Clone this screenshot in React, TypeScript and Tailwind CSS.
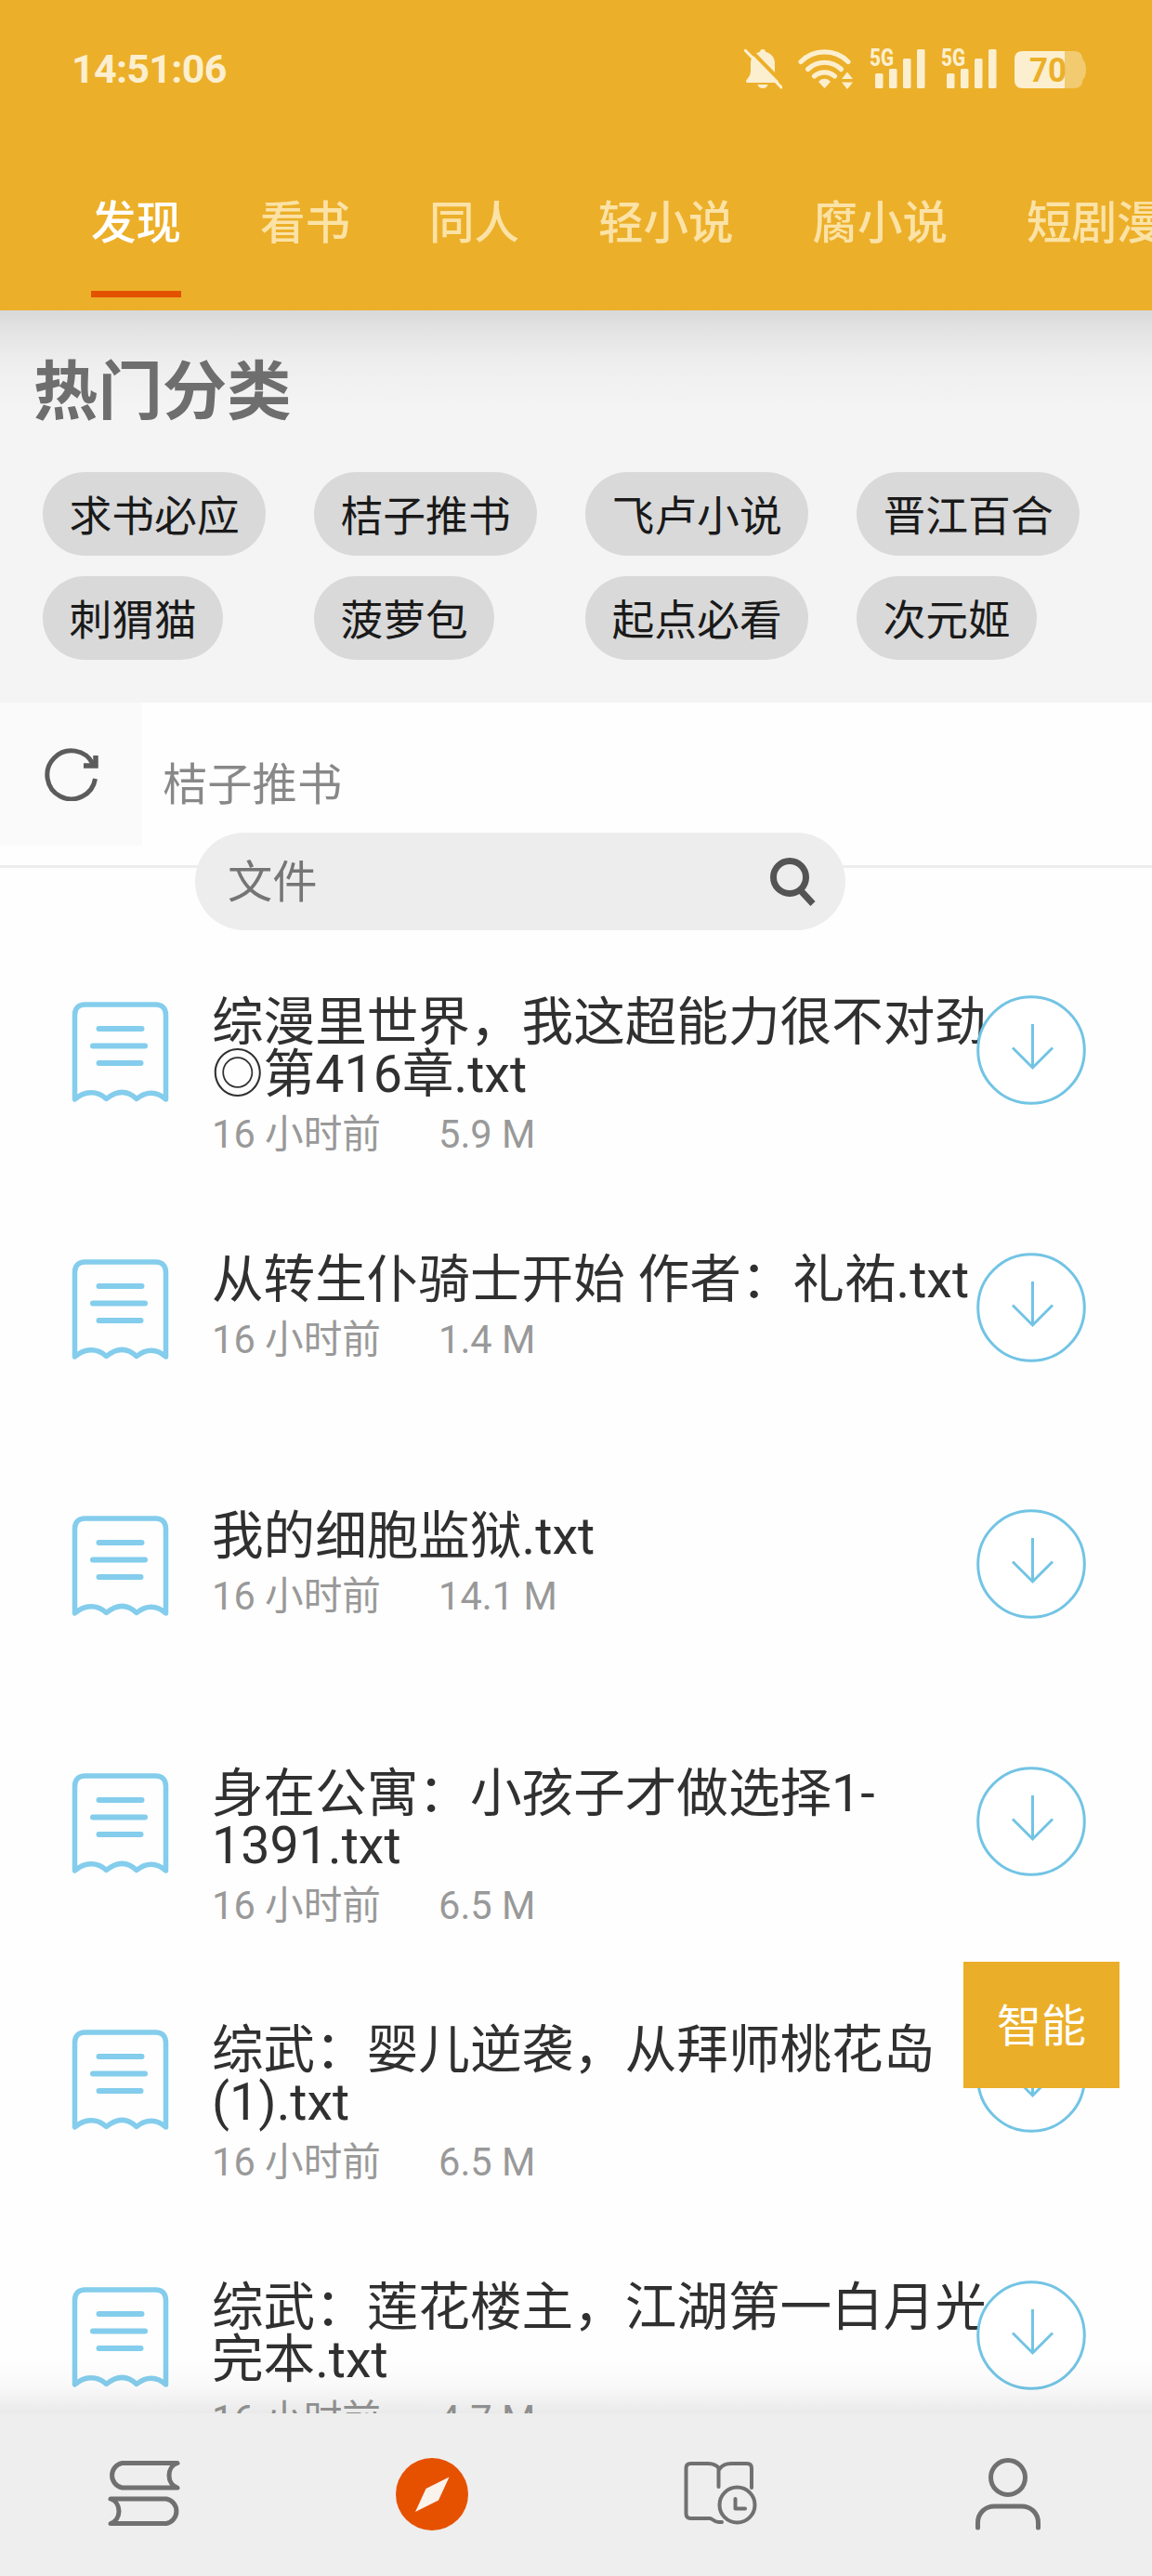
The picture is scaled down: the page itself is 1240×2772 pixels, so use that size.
import type { ReactNode } from 'react';

type Book = { title: string; time: string; size: string };

const TABS = ['发现', '看书', '同人', '轻小说', '腐小说', '短剧漫画'];

const CATEGORIES = [
  '求书必应', '桔子推书', '飞卢小说', '晋江百合',
  '刺猬猫', '菠萝包', '起点必看', '次元姬',
];

const BOOKS: Book[] = [
  { title: '综漫里世界，我这超能力很不对劲\n◎第416章.txt', time: '16 小时前', size: '5.9 M' },
  { title: '从转生仆骑士开始 作者：礼祐.txt', time: '16 小时前', size: '1.4 M' },
  { title: '我的细胞监狱.txt', time: '16 小时前', size: '14.1 M' },
  { title: '身在公寓：小孩子才做选择1-\n1391.txt', time: '16 小时前', size: '6.5 M' },
  { title: '综武：婴儿逆袭，从拜师桃花岛\n(1).txt', time: '16 小时前', size: '6.5 M' },
  { title: '综武：莲花楼主，江湖第一白月光\n完本.txt', time: '16 小时前', size: '4.7 M' },
];

function BellOffIcon() {
  return (
    <svg width="41" height="44" viewBox="0 0 41 44" fill="#fcefcf">
      <path d="M20 1c2 0 3 1.200 3 2.800C29 5.200 33 10 33 16v9c0 4 1.500 6 3.500 8.500 1 1.500.5 3.500-.5 3.500H3.500C2 37 1.500 35.500 2.500 34 5.500 30.500 7 28 7 24v-8C7 10 11 5.200 17 3.800 17 2.200 18 1 20 1z" />
      <path d="M14.500 39h11c-1 3-3 4-5.500 4s-4.500-1-5.500-4z" />
      <path d="M4 -1 45 41" stroke="#ecaf29" strokeWidth="4" />
      <path d="M1.500 2.500 40 42" stroke="#fcefcf" strokeWidth="3.200" strokeLinecap="round" />
    </svg>
  );
}

function WifiIcon() {
  return (
    <svg width="60" height="44" viewBox="0 0 60 44" fill="none" stroke="#fcefcf" strokeWidth="5.200" strokeLinecap="round">
      <path d="M3 14.500a36 36 0 0 1 51 0" />
      <path d="M10.500 22.500a26 26 0 0 1 36 0" />
      <path d="M17.500 30a16.500 16.500 0 0 1 22 0" />
      <path d="M22 36c3-4.500 10-4.500 13 0l-6.500 7z" fill="#fcefcf" stroke="none" />
      <path d="M47 33l6-7.500 6 7.500zM47 36.500l6 7.500 6-7.500z" fill="#fcefcf" stroke="none" />
    </svg>
  );
}

function SignalIcon() {
  return (
    <svg className="overflow-visible" width="60" height="44" viewBox="0 0 60 44" fill="#fcefcf">
      <text x="0" y="18.500" fontFamily="Roboto, sans-serif" fontSize="26" fontWeight="800" textLength="26" lengthAdjust="spacingAndGlyphs">
        5G
      </text>
      <rect x="6" y="27" width="8.500" height="16" rx="1.500" />
      <rect x="21" y="22" width="8.500" height="21" rx="1.500" />
      <rect x="36" y="11" width="8.500" height="32" rx="1.500" />
      <rect x="51" y="1" width="8.500" height="42" rx="1.500" />
    </svg>
  );
}

function BatteryIcon() {
  return (
    <svg width="80" height="44" viewBox="0 0 80 44">
      <path d="M56 3h10c6 0 9 3 9.500 9 2 2 3.500 5 3.500 11s-1.500 9-3.500 11c-.5 6-3.500 9-9.500 9H56z" fill="#f2ca70" />
      <path d="M11 3h45v40H11c-6 0-9-3-9-9V12c0-6 3-9 9-9z" fill="#fcefcf" />
      <text x="18" y="36" fill="#ecaf29" fontFamily="Roboto, sans-serif" fontSize="36" fontWeight="700" textLength="40" lengthAdjust="spacingAndGlyphs">
        70
      </text>
    </svg>
  );
}

function RefreshIcon() {
  return (
    <svg width="58" height="58" viewBox="0 0 58 58" fill="none" stroke="#5c5c5c" strokeWidth="5">
      <path d="M54.500 34A26 26 0 1 1 52 18" />
      <path d="M55 9v11H42" strokeWidth="5.500" />
    </svg>
  );
}

function SearchIcon() {
  return (
    <svg className="mt-[3px]" width="50" height="54" viewBox="0 0 50 54" fill="none" stroke="#545454" strokeWidth="7">
      <circle cx="21" cy="21" r="17.500" />
      <path d="M32.500 35 46 49.500" />
    </svg>
  );
}

function DocIcon() {
  return (
    <svg className="mt-[7px] shrink-0" width="106" height="110" viewBox="0 0 106 110" fill="none" stroke="#84cdec" strokeWidth="5.500" strokeLinecap="round" strokeLinejoin="round">
      <path d="M3.500 105V14C3.500 7 7.500 3 14.500 3h76c7 0 11 4 11 11v91C92 96 80 96 70 104.500 60 95 49 95 37.500 104.500 27 95 14 96 3.500 105z" />
      <path d="M29.500 29h46M23 47.500h56M29.500 66h45" strokeWidth="6" />
    </svg>
  );
}

function DownloadIcon() {
  return (
    <svg className="relative shrink-0" width="118" height="118" viewBox="0 0 118 118" fill="none" stroke="#72c4e4" strokeWidth="3">
      <circle cx="59" cy="59" r="57.300" fill="#fff" />
      <path d="M60.500 31v46M39 56.500l21.500 21.500L82 56.500" />
    </svg>
  );
}

function NavItem({ children }: { children: ReactNode }) {
  return <div className="flex flex-1 justify-center pt-[47px]">{children}</div>;
}

function BookRow({ book }: { book: Book }) {
  return (
    <li className="flex h-[276.6px] items-start pl-[77px]">
      <DocIcon />
      <div className="ml-[45px] w-[823px] shrink-0 pt-px">
        <p className="whitespace-pre text-[55.6px] leading-[56px] text-[#303030]">{book.title}</p>
        <p className="mt-[9px] flex whitespace-pre text-[41.6px] leading-[56px] text-[#999]">
          <span className="w-[244px]">{book.time}</span>
          <span>{book.size}</span>
        </p>
      </div>
      <DownloadIcon />
    </li>
  );
}

export default function App() {
  return (
    <div
      lang="zh-CN"
      className="relative flex h-[2772px] w-[1240px] flex-col overflow-hidden bg-[#fefefe] font-[Roboto,'Noto_Sans_CJK_SC',sans-serif]"
    >
      <header className="h-[334px] shrink-0 bg-[#ecaf29]">
        <div className="flex h-[148px] items-center justify-between pl-[77px] pr-[70px]">
          <span className="text-[43px] font-bold tracking-[-0.7px] text-[#fcefcf]">14:51:06</span>
          <div className="flex items-center gap-[17px]">
            <BellOffIcon />
            <WifiIcon />
            <SignalIcon />
            <SignalIcon />
            <BatteryIcon />
          </div>
        </div>
        <nav className="flex gap-[85px] overflow-hidden pl-[98px]">
          {TABS.map((tab, i) => (
            <div
              key={tab}
              className={
                i === 0
                  ? 'h-[172px] shrink-0 border-b-[7px] border-[#e35200] pt-[57px] text-[48.5px] font-medium text-white'
                  : 'h-[172px] shrink-0 pt-[57px] text-[48.5px] font-medium text-[#fbe2a6]'
              }
            >
              {tab}
            </div>
          ))}
        </nav>
      </header>

      <section className="h-[422px] shrink-0 bg-[#f4f4f4] bg-[linear-gradient(#d8d8d8,#e2e2e2_18px,#eeeeee_55px,#f4f4f4_105px)] pt-[51px]">
        <h1 className="pl-[36px] text-[69.4px] font-bold leading-[76px] text-[#6e6e6e]">热门分类</h1>
        <ul className="mt-[47px] grid grid-cols-[repeat(4,292px)] gap-y-[22px] pl-[46px]">
          {CATEGORIES.map((name) => (
            <li
              key={name}
              className="h-[90px] justify-self-start rounded-full bg-[#d9d9d9] px-[28.5px] pt-[5px] text-[45.8px] leading-[88px] text-[#1a1a1a]"
            >
              {name}
            </li>
          ))}
        </ul>
      </section>

      <div className="flex h-[178px] shrink-0 border-b-[3px] border-[#ededed]">
        <div className="flex h-[154px] w-[153px] items-center justify-center bg-[#fafafa]">
          <RefreshIcon />
        </div>
        <span className="pl-[22px] pt-[53px] text-[48.3px] leading-[72px] text-[#888]">桔子推书</span>
      </div>
      <div className="relative -mt-[38px] ml-[210px] flex h-[105px] w-[700px] shrink-0 items-center justify-between rounded-full bg-[#ededed] pl-[35px] pr-[31px]">
        <span className="pt-[3px] text-[48.3px] leading-[72px] text-[#757575]">文件</span>
        <SearchIcon />
      </div>

      <ul className="min-h-0 flex-1 overflow-hidden pt-[70px]">
        {BOOKS.map((book) => (
          <BookRow key={book.title} book={book} />
        ))}
      </ul>

      <button className="absolute left-[1037px] top-[2111px] h-[136px] w-[168px] bg-[#ebae29] pt-1 text-[48px] text-white">
        智能
      </button>

      <footer className="relative flex h-[175px] shrink-0 bg-[#eee]">
        {/* soft fade over the end of the list */}
        <div className="absolute inset-x-0 bottom-full h-[60px] bg-linear-to-t from-black/8 via-black/2 to-transparent" />
        <NavItem>
          <svg width="80" height="80" viewBox="0 0 80 80" fill="none" stroke="#707070" strokeWidth="5" strokeLinecap="round" strokeLinejoin="round">
            <path d="M76 6.500H16.500a13.500 13.500 0 0 0 0 26.500H76c-12-4-12-22.500 0-26.500z" />
            <path d="M4 45h60a13.500 13.500 0 0 1 0 26.500H4C16 67.500 16 49 4 45z" />
          </svg>
        </NavItem>
        <NavItem>
          <svg width="80" height="80" viewBox="0 0 80 80">
            <circle cx="40" cy="40" r="39" fill="#e65100" />
            <path d="M58.500 21.500 47 46.500 22 59 33.500 34z" fill="#f9f3ec" />
          </svg>
        </NavItem>
        <NavItem>
          <svg width="80" height="80" viewBox="0 0 80 80" fill="none" stroke="#707070" strokeWidth="4" strokeLinecap="round" strokeLinejoin="round">
            <path d="M74 33V12c0-3.500-2-5-5-5H52c-6 0-10 2-12.500 6C37 9 33 7 27 7H8.500C5 7 3.500 8.500 3.500 12v49c0 3.500 1.500 5 5 5H29c3 0 4 4 9.500 4H42M38.500 12v20" />
            <circle cx="58.500" cy="51.500" r="19" />
            <path d="M56.500 45v10.500H67" />
          </svg>
        </NavItem>
        <NavItem>
          <svg width="80" height="80" viewBox="0 0 80 80" fill="none" stroke="#707070" strokeWidth="5" strokeLinecap="round">
            <circle cx="40" cy="22" r="18.500" />
            <path d="M7.500 76v-5c0-11 8-18 18-18h29c10 0 18 7 18 18v5" />
          </svg>
        </NavItem>
      </footer>
    </div>
  );
}
